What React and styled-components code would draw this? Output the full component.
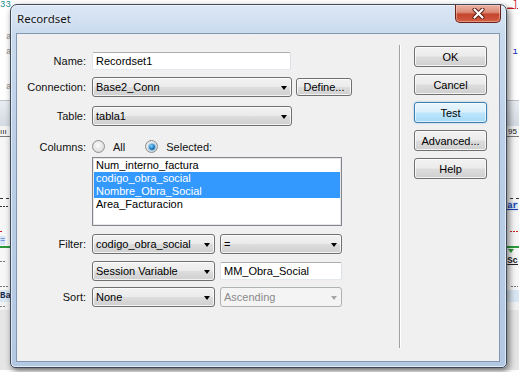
import React from 'react'
import styled, { createGlobalStyle, css } from 'styled-components'

const GlobalStyle = createGlobalStyle`
  html, body {
    margin: 0;
    padding: 0;
  }
  body {
    width: 519px;
    height: 372px;
    overflow: hidden;
    background: #ffffff;
    font-family: "Liberation Sans", Arial, sans-serif;
    font-size: 11px;
  }
`

const columns = [
  { name: 'Num_interno_factura' },
  { name: 'codigo_obra_social', selected: true },
  { name: 'Nombre_Obra_Social', selected: true },
  { name: 'Area_Facturacion' },
]

const sideButtons = ['OK', 'Cancel', 'Test', 'Advanced...', 'Help']

function App() {
  return (
    <Screen>
      <GlobalStyle />

      {/* editor that sits behind the dialog */}
      <Backdrop>
        <EditorLine $h={10} $bg='#ffffff'>
          <EdgeText $c='#1b8c93'>33</EdgeText>
          <EdgeText $c='#c4161c' $u>_]</EdgeText>
        </EditorLine>
        <EditorLine $h={20} $bg='#ffffff' />
        <EditorLine $h={15} $bg='#ffffff' $indent={6}>
          <EdgeText $c='#8a8a8a'>a</EdgeText>
        </EditorLine>
        <EditorLine $h={15} $bg='#ffffff' $indent={6}>
          <EdgeText $c='#8a8a8a'>a</EdgeText>
          <EdgeText $c='#2030c0'>ı</EdgeText>
        </EditorLine>
        <EditorLine $h={20} $bg='#ffffff' />
        <EditorLine $h={15} $bg='#ffffff' $indent={6}>
          <EdgeText $c='#8a8a8a'>a</EdgeText>
        </EditorLine>
        <EditorLine $h={5} $bg='#ffffff' />
        <Toolbar />
        <Ruler>
          <EdgeText $c='#222'>ııı</EdgeText>
          <RulerNum>95</RulerNum>
        </Ruler>
        <EditorLine $h={59} $bg='#f7f7f7' />
        <EditorLine $h={4} $bg='#f7f7f7' $dashed />
        <EditorLine $h={12} $bg='#f7f7f7'>
          <Dash $c='#333' $w={8} />
          <EdgeText $c='#1a3fb0' $bold $u $hl='#dce8f6'>ar</EdgeText>
        </EditorLine>
        <EditorLine $h={16} $bg='#f7f7f7' />
        <EditorLine $h={6} $bg='#f7f7f7'>
          <Dash $c='#d02020' $w={3} />
          <Dash $c='#d02020' $w={8} />
        </EditorLine>
        <EditorLine $h={12} $bg='#f7f7f7'>
          <EdgeText $c='#2a55c8' $hl='#d6e6f7'>=</EdgeText>
        </EditorLine>
        <EditorLine $h={2} $bg='#2e9a3a' />
        <EditorLine $h={6} $bg='#f7f7f7'>
          <span />
          <GreenMark />
        </EditorLine>
        <EditorLine $h={14} $bg='#f7f7f7'>
          <Dash $c='#777' $w={6} />
          <EdgeText $c='#222' $bold $u>Sc</EdgeText>
        </EditorLine>
        <EditorLine $h={14} $bg='#f7f7f7' />
        <EditorLine $h={8} $bg='#f7f7f7'>
          <Dash $c='#777' $w={9} />
          <Dash $c='#777' $w={7} />
        </EditorLine>
        <EditorLine $h={12} $bg='#d9e7f4'>
          <EdgeText $c='#1a2a4a' $bold>Ba</EdgeText>
        </EditorLine>
        <EditorLine $h={8} $bg='#f2f2f2'>
          <Dash $c='#888' $w={6} />
        </EditorLine>
        <EditorLine $h={60} $bg='#e6e6e6' />
      </Backdrop>

      <Window>
        <TitleBar>
          <Title>Recordset</Title>
          <CloseButton>
            <svg width='13' height='11' viewBox='0 0 13 11'>
              <path d='M2.5 1.5 L10.5 9.5 M10.5 1.5 L2.5 9.5' stroke='#5b1a12' strokeWidth='4' strokeLinecap='round' />
              <path d='M2.5 1.5 L10.5 9.5 M10.5 1.5 L2.5 9.5' stroke='#ffffff' strokeWidth='2.2' strokeLinecap='round' />
            </svg>
          </CloseButton>
        </TitleBar>

        <Client>
          <FormPane>
            <FormRow $mt={0} $h={18}>
              <Label>Name:</Label>
              <Fields>
                <TextBox $w={199} defaultValue='Recordset1' readOnly />
              </Fields>
            </FormRow>

            <FormRow $mt={7} $h={20}>
              <Label>Connection:</Label>
              <Fields>
                <Select $w={200}>
                  <span>Base2_Conn</span>
                  <Arrow />
                </Select>
                <SmallButton>Define...</SmallButton>
              </Fields>
            </FormRow>

            <FormRow $mt={9} $h={20}>
              <Label>Table:</Label>
              <Fields>
                <Select $w={200}>
                  <span>tabla1</span>
                  <Arrow />
                </Select>
              </Fields>
            </FormRow>

            <FormRow $mt={14} $h={13}>
              <Label>Columns:</Label>
              <Fields>
                <Radio />
                <RadioText $gap={16}>All</RadioText>
                <Radio $checked />
                <RadioText>Selected:</RadioText>
              </Fields>
            </FormRow>

            <FormRow $mt={4} $h={69}>
              <span />
              <ListBox>
                {columns.map((c) => (
                  <ListItem key={c.name} $selected={c.selected}>{c.name}</ListItem>
                ))}
              </ListBox>
            </FormRow>

            <FormRow $mt={8} $h={20}>
              <Label>Filter:</Label>
              <Fields $gap={5}>
                <Select $w={123}>
                  <span>codigo_obra_social</span>
                  <Arrow />
                </Select>
                <Select $w={122}>
                  <span>=</span>
                  <Arrow />
                </Select>
              </Fields>
            </FormRow>

            <FormRow $mt={7} $h={20}>
              <span />
              <Fields $gap={5}>
                <Select $w={123}>
                  <span>Session Variable</span>
                  <Arrow />
                </Select>
                <TextBox $w={122} defaultValue='MM_Obra_Social' readOnly />
              </Fields>
            </FormRow>

            <FormRow $mt={6} $h={20}>
              <Label>Sort:</Label>
              <Fields $gap={5}>
                <Select $w={123}>
                  <span>None</span>
                  <Arrow />
                </Select>
                <Select $w={122} $disabled>
                  <span>Ascending</span>
                  <Arrow $disabled />
                </Select>
              </Fields>
            </FormRow>
          </FormPane>

          <Separator />

          <ButtonStack>
            {sideButtons.map((b) => (
              <DialogButton key={b} $default={b === 'Test'}>{b}</DialogButton>
            ))}
          </ButtonStack>
        </Client>
      </Window>
    </Screen>
  )
}

export default App

const Screen = styled.div`
  position: relative;
  width: 519px;
  height: 372px;
  overflow: hidden;
`
const Backdrop = styled.div`
  width: 100%;
  height: 100%;
  display: flex;
  flex-direction: column;
`
const EditorLine = styled.div`
  flex: none;
  height: ${(p) => p.$h}px;
  background: ${(p) => p.$bg};
  ${(p) => p.$dashed && css`
    background-image: linear-gradient(90deg, #333 50%, transparent 50%);
    background-size: 6px 1px;
    background-repeat: repeat-x;
    background-position: 0 2px;
  `}
  display: flex;
  justify-content: space-between;
  align-items: center;
  padding: 0 1px 0 ${(p) => p.$indent || 0}px;
  font-family: "Liberation Mono", monospace;
  font-size: 9px;
  line-height: 9px;
  white-space: nowrap;
  overflow: hidden;
`
const EdgeText = styled.span`
  color: ${(p) => p.$c};
  font-weight: ${(p) => (p.$bold ? 700 : 400)};
  text-decoration: ${(p) => (p.$u ? 'underline' : 'none')};
  background: ${(p) => p.$hl || 'transparent'};
`
const Dash = styled.span`
  width: ${(p) => p.$w}px;
  height: 1px;
  background-image: linear-gradient(90deg, ${(p) => p.$c} 60%, transparent 60%);
  background-size: 3px 1px;
`
const GreenMark = styled.span`
  width: 0;
  height: 0;
  margin-right: 4px;
  border-left: 3px solid transparent;
  border-right: 3px solid transparent;
  border-top: 4px solid #2e9a3a;
`
const Toolbar = styled.div`
  flex: none;
  height: 25px;
  background: linear-gradient(180deg, #e9edf2 0%, #d5dbe3 100%);
  border-top: 1px solid #b9c2cd;
`
const Ruler = styled.div`
  flex: none;
  height: 11px;
  box-sizing: border-box;
  background: #f4f4f4;
  border-bottom: 1px solid #7a7a7a;
  display: flex;
  justify-content: space-between;
  align-items: flex-end;
  font-family: "Liberation Sans", Arial, sans-serif;
  font-size: 8px;
  line-height: 9px;
  padding-right: 2px;
`
const RulerNum = styled.span`
  border-left: 1px solid #333;
  padding-left: 1px;
  color: #222;
`

const Window = styled.div`
  position: absolute;
  left: 10px;
  top: 4px;
  width: 497px;
  height: 364px;
  box-sizing: border-box;
  border: 1px solid #3e4a5a;
  border-radius: 7px 7px 5px 5px;
  background: linear-gradient(180deg, #dce7f4 0px, #c9daee 30px, #bccfe8 140px, #b3c8e3 100%);
  box-shadow: 2px 3px 7px rgba(0, 0, 0, 0.55), inset 0 0 0 1px rgba(255, 255, 255, 0.6);
  display: flex;
  flex-direction: column;
`
const TitleBar = styled.div`
  flex: none;
  height: 28px;
  display: flex;
  padding-left: 6px;
`
const Title = styled.span`
  align-self: center;
  margin-top: -2px;
  font-family: "Noto Sans", "Open Sans", sans-serif;
  font-size: 11.5px;
  color: #151515;
  text-shadow: 0 0 5px rgba(255, 255, 255, 0.95);
`
const CloseButton = styled.div`
  margin-left: auto;
  margin-right: 5px;
  width: 46px;
  height: 18px;
  box-sizing: border-box;
  border: 1px solid #6b2219;
  border-top: none;
  border-radius: 0 0 5px 5px;
  background: linear-gradient(180deg, #ebb3a5 0%, #dc8c78 42%, #c4452d 55%, #d25e42 100%);
  box-shadow: inset 0 0 0 1px rgba(255, 215, 205, 0.45);
  display: flex;
  align-items: center;
  justify-content: center;
`
const Client = styled.div`
  flex: 1;
  margin: 0 6px 5px 5px;
  box-sizing: border-box;
  border: 1px solid #8497b0;
  background: #f0f0f0;
  display: flex;
`
const FormPane = styled.div`
  width: 382px;
  padding-top: 18px;
  display: flex;
  flex-direction: column;
`
const FormRow = styled.div`
  display: grid;
  grid-template-columns: 69px auto;
  column-gap: 6px;
  align-items: center;
  margin-top: ${(p) => p.$mt}px;
  height: ${(p) => p.$h}px;
`
const Label = styled.span`
  text-align: right;
  white-space: nowrap;
  color: #111;
`
const Fields = styled.div`
  display: flex;
  align-items: center;
  gap: ${(p) => (p.$gap !== undefined ? p.$gap : 4)}px;
`
const TextBox = styled.input`
  width: ${(p) => p.$w}px;
  height: 18px;
  box-sizing: border-box;
  margin: 0;
  padding: 0 3px;
  border: 1px solid;
  border-color: #abadb3 #dbdfe6 #e3e9ef #e2e3ea;
  border-radius: 2px;
  background: #ffffff;
  font-family: "Liberation Sans", Arial, sans-serif;
  font-size: 11px;
  color: #000;
  outline: none;
`
const buttonFace = css`
  border: 1px solid #707070;
  border-radius: 3px;
  background: linear-gradient(180deg, #f2f2f2 0%, #ebebeb 48%, #dddddd 52%, #cfcfcf 100%);
  box-shadow: inset 0 0 0 1px rgba(255, 255, 255, 0.75);
`
const Select = styled.div`
  width: ${(p) => p.$w}px;
  height: 20px;
  box-sizing: border-box;
  padding: 0 4px 0 3px;
  display: flex;
  align-items: center;
  justify-content: space-between;
  white-space: nowrap;
  color: #000;
  ${buttonFace}
  ${(p) => p.$disabled && css`
    border-color: #adb2b5;
    background: #f4f4f4;
    box-shadow: none;
    color: #8a8a8a;
  `}
`
const Arrow = styled.span`
  width: 0;
  height: 0;
  border-left: 3.5px solid transparent;
  border-right: 3.5px solid transparent;
  border-top: 4px solid ${(p) => (p.$disabled ? '#a6a6a6' : '#000')};
  margin-top: 1px;
`
const SmallButton = styled.div`
  width: 56px;
  height: 18px;
  box-sizing: border-box;
  display: flex;
  align-items: center;
  justify-content: center;
  color: #000;
  ${buttonFace}
`
const Radio = styled.span`
  width: 13px;
  height: 13px;
  box-sizing: border-box;
  border-radius: 50%;
  border: 1px solid #8e8f8f;
  background: radial-gradient(circle at 45% 40%, #fbfbfb 0%, #e4e4e4 55%, #cfcfcf 100%);
  display: flex;
  align-items: center;
  justify-content: center;
  &::after {
    content: '';
    display: ${(p) => (p.$checked ? 'block' : 'none')};
    width: 6px;
    height: 6px;
    border-radius: 50%;
    background: radial-gradient(circle at 40% 35%, #8fd8f7 0%, #2a87cf 45%, #0d3b70 100%);
    box-shadow: 0 0 1px 1px rgba(80, 170, 230, 0.6);
  }
`
const RadioText = styled.span`
  margin-left: 4px;
  margin-right: ${(p) => p.$gap || 0}px;
  color: #111;
`
const ListBox = styled.div`
  width: 250px;
  height: 69px;
  box-sizing: border-box;
  border: 1px solid #828790;
  padding: 1px;
  background: #ffffff;
  box-shadow: inset 0 0 0 1px #e6e6e6;
`
const ListItem = styled.div`
  height: 13px;
  line-height: 13px;
  padding-left: 2px;
  white-space: nowrap;
  color: ${(p) => (p.$selected ? '#ffffff' : '#000')};
  background: ${(p) => (p.$selected ? '#3399ff' : 'transparent')};
`
const Separator = styled.div`
  width: 1px;
  background: #a0a0a0;
  border-right: 1px solid #ffffff;
  margin: 11px 0 13px;
`
const ButtonStack = styled.div`
  padding: 12px 12px 0 13px;
  display: flex;
  flex-direction: column;
  gap: 7px;
`
const DialogButton = styled.div`
  width: 73px;
  height: 21px;
  box-sizing: border-box;
  display: flex;
  align-items: center;
  justify-content: center;
  color: #000;
  ${buttonFace}
  ${(p) => p.$default && css`
    border-color: #3c7fb1;
    background: linear-gradient(180deg, #eaf6fd 0%, #d9f0fc 48%, #bee6fd 52%, #a7d9f5 100%);
    box-shadow: inset 0 0 0 1px rgba(255, 255, 255, 0.6), 0 0 2px rgba(60, 140, 210, 0.5);
  `}
`
